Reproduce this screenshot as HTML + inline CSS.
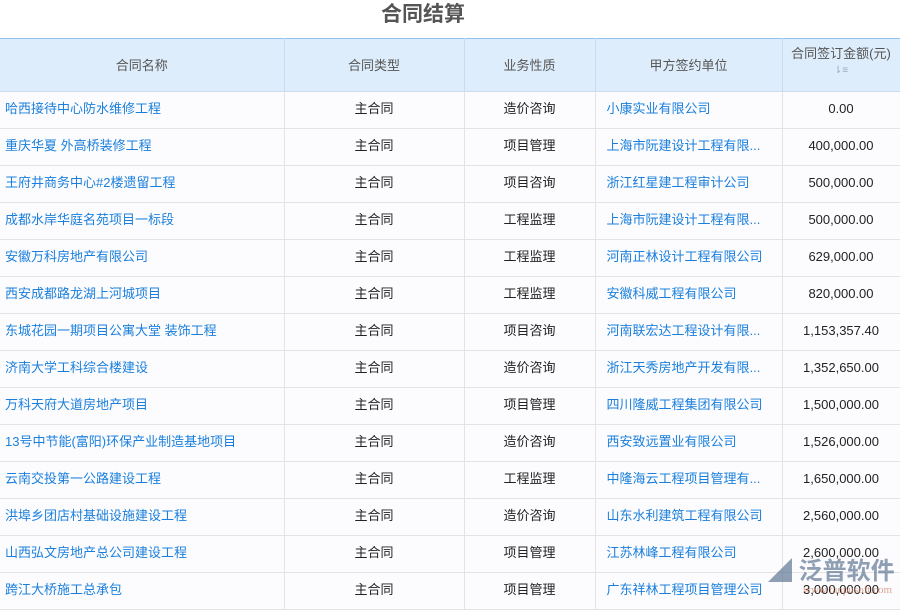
<!DOCTYPE html>
<html><head><meta charset="utf-8"><style>
*{margin:0;padding:0;box-sizing:border-box}
body{width:900px;height:600px;overflow:hidden;background:#fff;font-family:"Liberation Sans","Noto Sans CJK SC",sans-serif;font-size:13px;position:relative}
h1{position:absolute;left:0;width:846px;top:1px;text-align:center;font-size:21px;font-weight:bold;color:#555;line-height:28px}
table{position:absolute;top:38px;left:0;border-collapse:collapse;table-layout:fixed;width:900px}
th{height:53px;padding:0;background:#deedfb;color:#555;font-weight:normal;border-top:1px solid #8fc2ee;border-right:1px solid #c9dcee;border-bottom:1px solid #c9dcee;font-size:13px}
td{height:37px;padding:0 0 3px 0;line-height:16px;border-right:1px solid #e3e3e3;border-bottom:1px solid #e3e3e3;background:#fcfcfe;color:#222;text-align:center;white-space:nowrap;overflow:hidden}
td.l{text-align:left;padding-left:5px;color:#1a7fdc}
td.u{text-align:left;padding-left:11px;color:#1a7fdc;text-overflow:ellipsis}
.wm{position:absolute;left:768px;top:551px;font-size:24px;color:#6a7f9a;font-weight:bold;opacity:.75;white-space:nowrap}
.wm2{position:absolute;left:803px;top:584px;font-size:11px;color:#d08060;opacity:.7;font-family:"Liberation Serif",serif;white-space:nowrap}
</style></head><body>
<h1>合同结算</h1>
<table>
<colgroup><col style="width:284px"><col style="width:180px"><col style="width:131px"><col style="width:187px"><col style="width:118px"></colgroup>
<tr><th style="padding-bottom:2px">合同名称</th><th style="padding-bottom:2px">合同类型</th><th style="padding-bottom:2px">业务性质</th><th style="padding-bottom:2px">甲方签约单位</th><th style="line-height:15px;padding-bottom:6px">合同签订金额(元)<br><span style="color:#9ab;font-size:10px">⇂≡</span></th></tr>
<tr><td class="l">哈西接待中心防水维修工程</td><td>主合同</td><td>造价咨询</td><td class="u">小康实业有限公司</td><td>0.00</td></tr>
<tr><td class="l">重庆华夏 外高桥装修工程</td><td>主合同</td><td>项目管理</td><td class="u">上海市阮建设计工程有限...</td><td>400,000.00</td></tr>
<tr><td class="l">王府井商务中心#2楼遗留工程</td><td>主合同</td><td>项目咨询</td><td class="u">浙江红星建工程审计公司</td><td>500,000.00</td></tr>
<tr><td class="l">成都水岸华庭名苑项目一标段</td><td>主合同</td><td>工程监理</td><td class="u">上海市阮建设计工程有限...</td><td>500,000.00</td></tr>
<tr><td class="l">安徽万科房地产有限公司</td><td>主合同</td><td>工程监理</td><td class="u">河南正林设计工程有限公司</td><td>629,000.00</td></tr>
<tr><td class="l">西安成都路龙湖上河城项目</td><td>主合同</td><td>工程监理</td><td class="u">安徽科威工程有限公司</td><td>820,000.00</td></tr>
<tr><td class="l">东城花园一期项目公寓大堂 装饰工程</td><td>主合同</td><td>项目咨询</td><td class="u">河南联宏达工程设计有限...</td><td>1,153,357.40</td></tr>
<tr><td class="l">济南大学工科综合楼建设</td><td>主合同</td><td>造价咨询</td><td class="u">浙江天秀房地产开发有限...</td><td>1,352,650.00</td></tr>
<tr><td class="l">万科天府大道房地产项目</td><td>主合同</td><td>项目管理</td><td class="u">四川隆威工程集团有限公司</td><td>1,500,000.00</td></tr>
<tr><td class="l">13号中节能(富阳)环保产业制造基地项目</td><td>主合同</td><td>造价咨询</td><td class="u">西安致远置业有限公司</td><td>1,526,000.00</td></tr>
<tr><td class="l">云南交投第一公路建设工程</td><td>主合同</td><td>工程监理</td><td class="u">中隆海云工程项目管理有...</td><td>1,650,000.00</td></tr>
<tr><td class="l">洪埠乡团店村基础设施建设工程</td><td>主合同</td><td>造价咨询</td><td class="u">山东水利建筑工程有限公司</td><td>2,560,000.00</td></tr>
<tr><td class="l">山西弘文房地产总公司建设工程</td><td>主合同</td><td>项目管理</td><td class="u">江苏林峰工程有限公司</td><td>2,600,000.00</td></tr>
<tr><td class="l">跨江大桥施工总承包</td><td>主合同</td><td>项目管理</td><td class="u">广东祥林工程项目管理公司</td><td>3,000,000.00</td></tr>
</table>
<div class="wm">◢ 泛普软件</div>
<div class="wm2">www.fanpusoft.com</div>
</body></html>
